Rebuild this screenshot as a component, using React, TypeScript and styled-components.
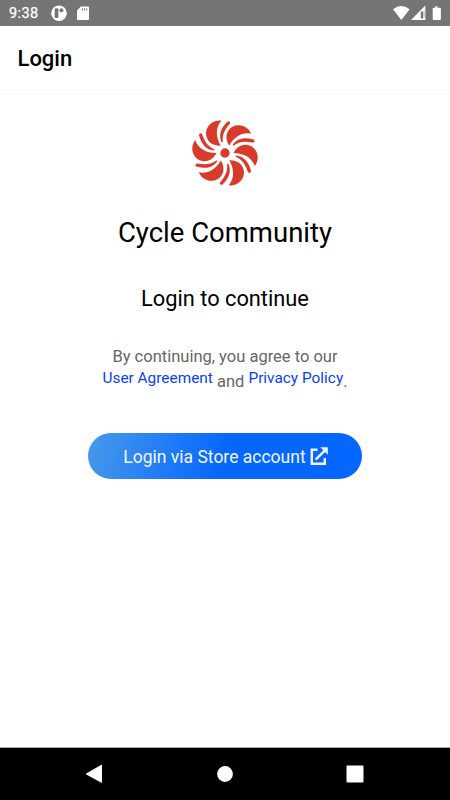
import React from "react";
import styled, { createGlobalStyle } from "styled-components";

const GlobalStyle = createGlobalStyle`
  * { box-sizing: border-box; }
  body { margin: 0; background: #fff; font-family: Roboto, sans-serif; }
`;

const Screen = styled.div`
  width: 450px;
  height: 800px;
  display: flex;
  flex-direction: column;
  background: #fff;
  overflow: hidden;
`;

const StatusBar = styled.header`
  height: 26px;
  flex: none;
  display: flex;
  align-items: center;
  justify-content: space-between;
  background: #757575;
  color: #fff;
`;

const StatusGroup = styled.div`
  display: flex;
  align-items: center;
  height: 26px;
`;

const Clock = styled.span`
  width: 42px;
  padding: 1px 0 0 9px;
  margin-right: 9px;
  font-size: 14.5px;
  font-weight: 400;
  letter-spacing: 0.4px;
  line-height: 27px;
  white-space: nowrap;
  -webkit-text-stroke: 0.25px #fff;
`;

const AppBar = styled.div`
  height: 64px;
  flex: none;
  padding-left: 17.5px;
  border-bottom: 1px solid #f8f8f8;
  font-size: 22px;
  font-weight: 500;
  line-height: 65px;
  color: #000;
`;

const Content = styled.main`
  flex: 1;
  display: flex;
  flex-direction: column;
  align-items: center;
  padding-top: 28px;
`;

const Logo = styled.svg`
  display: block;
  width: 70px;
  height: 70px;
`;

const Brand = styled.h1`
  margin: 28px 0 0;
  font-size: 27.5px;
  font-weight: 400;
  line-height: 34px;
  color: #000;
`;

const Prompt = styled.h2`
  margin: 36px 0 0;
  font-size: 21.8px;
  font-weight: 400;
  line-height: 26px;
  color: #000;
`;

const Terms = styled.div`
  margin-top: 34px;
  display: flex;
  flex-direction: column;
  align-items: center;
  font-size: 16.5px;
  line-height: 22px;
  color: #666;
`;

const TermsLine = styled.div`
  display: flex;
  height: 28px;
  margin-top: -2px;
  white-space: pre;
`;

const Muted = styled.span`
  padding-top: 5px;
`;

const TermsLink = styled.a`
  padding-top: 1px;
  font-size: 15.4px;
  color: #0b3ff2;
`;

const LoginButton = styled.button`
  margin: 39px 0 0;
  width: 274px;
  height: 46px;
  padding: 1px 0 0 1px;
  border: 0;
  border-radius: 23px;
  display: flex;
  align-items: center;
  justify-content: center;
  gap: 4px;
  background: linear-gradient(105deg, #4899ea 0%, #0567ff 50%, #0567ff 100%);
  color: #f3f7ff;
  font: 400 17.5px/46px Roboto, sans-serif;
`;

const NavBar = styled.nav`
  height: 53px;
  flex: none;
  padding: 0 30px;
  border-top: 1px solid #aaa;
  display: grid;
  grid-template-columns: repeat(3, 130px);
  place-items: center;
  background: #000;
`;

const BLADES = [0, 60, 120, 180, 240, 300];

export default function App() {
  return (
    <>
      <GlobalStyle />
      <Screen>
        <StatusBar>
          <StatusGroup>
            <Clock>9:38</Clock>
            <svg width="40" height="26" viewBox="0 0 40 26">
              <circle cx="8" cy="13.2" r="7.8" fill="#fff" />
              <rect x="3.7" y="8.3" width="3.7" height="9.6" rx="1.2" fill="#757575" />
              <circle cx="10.4" cy="10.3" r="2" fill="#757575" />
              <path d="M30 6.5h7a1 1 0 0 1 1 1v11.5a1 1 0 0 1-1 1H27a1 1 0 0 1-1-1v-8.5z" fill="#fff" />
              <path d="M31.4 8.3v2.2M33.6 8.3v2.2M35.8 8.3v2.2" stroke="#757575" strokeWidth="1" />
            </svg>
          </StatusGroup>
          <StatusGroup>
            <svg width="60" height="26" viewBox="390 0 60 26">
              <path d="M393 9.3Q401.3 2.8 409.6 9.3L401.3 20z" fill="#fff" />
              <path d="M425.3 5.5V20H411z" fill="#fff" />
              <path d="M420.8 11.5h2.5v7h-2.5z" fill="#757575" />
              <path d="M423.4 11h2v6h-2z" fill="#cfcfcf" />
              <path d="M435.2 6.2h2.2v1.5h2.5q1 0 1 1v10.3q0 1-1 1h-6.2q-1 0-1-1V8.7q0-1 1-1h1.5z" fill="#fff" />
            </svg>
          </StatusGroup>
        </StatusBar>
        <AppBar>Login</AppBar>
        <Content>
          <Logo viewBox="-105 -105 210 210" aria-hidden="true">
            <circle r="14" fill="#d93a2b" />
            {BLADES.map((angle) => (
              <g key={angle} transform={`rotate(${angle})`} fill="#d93a2b">
                <path d="M-11 -97C-36 -100 -56 -82 -57 -60C-57 -37 -40 -21 -13 -22C-28 -49 -29 -76 -11 -97Z" />
                <path d="M6 -93C11 -99 19 -93 14 -87C-3 -68 -9 -50 -6 -33L-10 -32C-20 -53 -13 -74 6 -93Z" />
              </g>
            ))}
          </Logo>
          <Brand>Cycle Community</Brand>
          <Prompt>Login to continue</Prompt>
          <Terms>
            <div>By continuing, you agree to our</div>
            <TermsLine>
              <TermsLink>User Agreement</TermsLink>
              <Muted> and </Muted>
              <TermsLink>Privacy Policy</TermsLink>
              <Muted>.</Muted>
            </TermsLine>
          </Terms>
          <LoginButton type="button">
            Login via Store account
            <svg width="18" height="19" viewBox="0 0 18 19" fill="none" stroke="#f3f7ff" strokeWidth="2.4">
              <path d="M7.5 2.8H1.8V16.8H14.8V11M5.6 12.7L14.5 3.8" />
              <path d="M10.3 .3h7.5v7.5z" fill="#f3f7ff" stroke="none" />
            </svg>
          </LoginButton>
        </Content>
        <NavBar>
          <svg width="20" height="20" viewBox="0 0 20 20"><path d="M1.2 9.6L16 1q1-.5 1 .7v16.2q0 1.2-1 .7L1.2 10.4q-.6-.4 0-.8z" fill="#fff" /></svg>
          <svg width="16" height="16" viewBox="0 0 16 16"><circle cx="8" cy="8" r="7.9" fill="#fff" /></svg>
          <svg width="18" height="18" viewBox="0 0 18 18"><rect x=".5" y=".5" width="17" height="17" rx="1" fill="#fff" /></svg>
        </NavBar>
      </Screen>
    </>
  );
}
